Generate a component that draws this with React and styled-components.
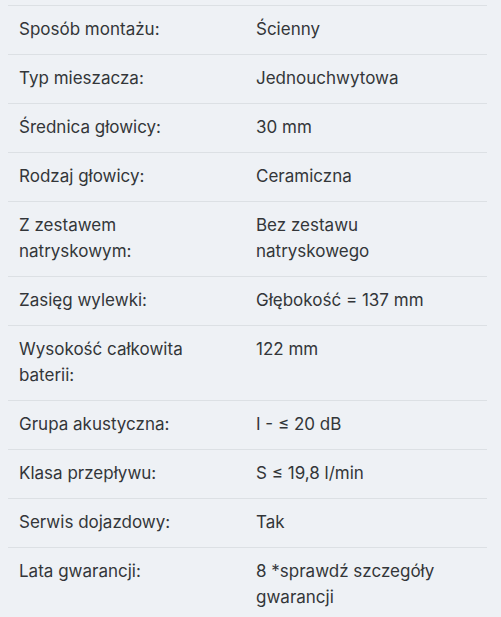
import React from 'react';
import styled, { createGlobalStyle } from 'styled-components';

const GlobalStyle = createGlobalStyle`
    html, body {
        margin: 0;
        padding: 0;
        background: #eef1f5;
    }
    body {
        font-family: Inter, "Open Sans", "Liberation Sans", sans-serif;
        color: #333639;
    }
`;

const Page = styled.div`
    width: 501px;
    height: 617px;
    overflow: hidden;
    background: #eef1f5;
    padding-top: 5px;
    box-sizing: border-box;
`;

const Table = styled.dl`
    margin: 0 0 0 8px;
    width: 479px;
    border-top: 1px solid #dce0e4;
`;

const Row = styled.div`
    display: grid;
    grid-template-columns: 237px 1fr;
    padding: 10px 11px 12px;
    border-bottom: 1px solid #dce0e4;
    font-size: 17px;
    line-height: 26px;
`;

const Label = styled.dt`
    margin: 0;
    padding-right: 32px;
`;

const Value = styled.dd`
    margin: 0;
    padding-right: 20px;
`;

const specs = [
    ['Sposób montażu:', 'Ścienny'],
    ['Typ mieszacza:', 'Jednouchwytowa'],
    ['Średnica głowicy:', '30 mm'],
    ['Rodzaj głowicy:', 'Ceramiczna'],
    ['Z zestawem natryskowym:', 'Bez zestawu natryskowego'],
    ['Zasięg wylewki:', 'Głębokość = 137 mm'],
    ['Wysokość całkowita baterii:', '122 mm'],
    ['Grupa akustyczna:', 'I - ≤ 20 dB'],
    ['Klasa przepływu:', 'S ≤ 19,8 l/min'],
    ['Serwis dojazdowy:', 'Tak'],
    ['Lata gwarancji:', '8 *sprawdź szczegóły gwarancji'],
];

const App = () => (
    <Page>
        <GlobalStyle />
        <Table>
            {specs.map(([label, value]) => (
                <Row key={label}>
                    <Label>{label}</Label>
                    <Value>{value}</Value>
                </Row>
            ))}
        </Table>
    </Page>
);

export default App;
